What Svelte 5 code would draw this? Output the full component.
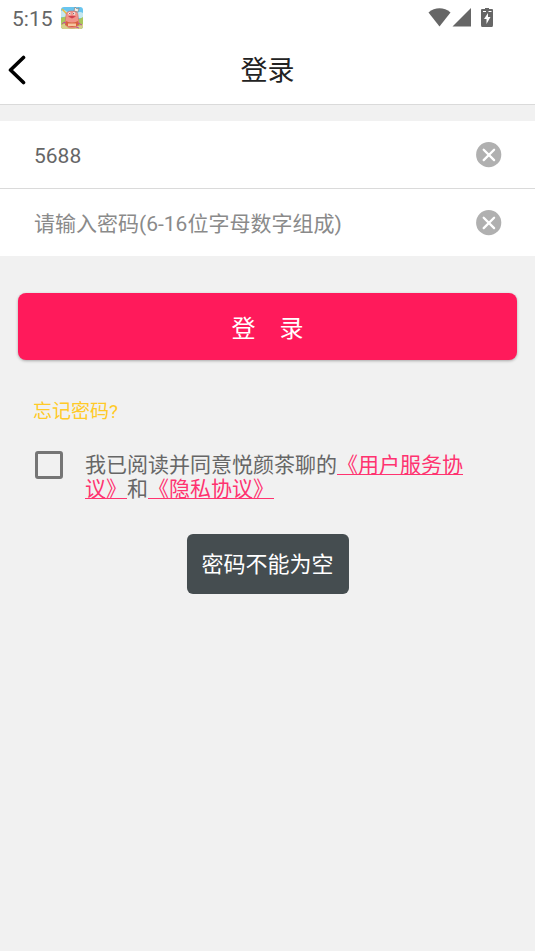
<script lang="ts">
    let account = $state('5688');
    let password = $state('');
    let agreed = $state(false);
    let toast = $state('密码不能为空');

    function submit(event: Event) {
        event.preventDefault();
        toast = password ? '' : '密码不能为空';
    }
</script>

{#snippet clearIcon()}
    <svg viewBox="0 0 26 26" width="26" height="26" aria-hidden="true">
        <circle cx="12.7" cy="12.7" r="12.6" fill="#b0b0b0" />
        <path d="M7.7 7.7l10.4 10.4M18.100 7.7L7.7 18.100" stroke="#fff" stroke-width="2.3" stroke-linecap="round" />
    </svg>
{/snippet}

<div class="screen">
    <div class="status-bar">
        <span class="time">5:15</span>
        <svg class="app-icon" viewBox="0 0 22 22" width="22" height="22" aria-hidden="true">
            <clipPath id="tile"><rect width="22" height="22" rx="3" /></clipPath>
            <g clip-path="url(#tile)">
                <rect width="22" height="22" fill="#69c5ef" />
                <path d="M0 4q3-2 5 0t4 0v6H0zM16 6q3-2 6 0v5h-6z" fill="#c5e8ef" />
                <path d="M0 11q5-3 11 0t11-1v12H0z" fill="#a9c75c" />
                <path d="M0 18q6-3 11 0t11-1v5H0z" fill="#d6cf8a" />
                <path d="M1 2l5 5" stroke="#e5bd3d" stroke-width="1.5" />
                <path d="M13 4l1-4 2 2 2-1-1 4z" fill="#f5f0e6" stroke="#77645f" stroke-width=".5" />
                <path d="M5 8q0-4 6-4t6 4l1 8q-1 5-7 5t-7-5z" fill="#f0948a" stroke="#c76861" stroke-width=".5" />
                <path d="M5 14q6 3 12 0l1 4q-7 4-14 0z" fill="#d8633f" />
                <path d="M7 16.500h8v2.500H7z" fill="#f5c7a0" />
                <circle cx="8.500" cy="6.500" r="1.200" fill="#fff" />
                <circle cx="13" cy="6.500" r="1.200" fill="#fff" />
                <circle cx="8.800" cy="6.600" r=".6" fill="#51353a" />
                <circle cx="12.700" cy="6.600" r=".6" fill="#51353a" />
                <path d="M7 9.500q4-1.500 8 0l-4 2z" fill="#cf3f4c" />
                <path d="M1 17q2-3 4-1M17 16l4 2M15 20l3 1" stroke="#bd4ba2" fill="none" />
            </g>
        </svg>
        <div class="indicators">
            <svg viewBox="0 0 66 20" width="66" height="20" aria-hidden="true" fill="#666">
                <path d="M0.500 4.400C7-1 16-1 22.500 4.400L11.500 18.500z" />
                <path d="M43 0v18.500H24.500z" />
                <path fill-rule="evenodd" d="M57 0h4v1h3q1 0 1 1v15q0 2-1 2H54q-1 0-1-2V2q0-1 1-1h3zM60 5l-4 6h2.500v5l4-7H60z" />
                <path d="M55 3.500h3M60.500 3.500h3" stroke="#fff" stroke-width="1" />
            </svg>
        </div>
    </div>

    <header>
        <button class="back" type="button" aria-label="返回">
            <svg viewBox="0 0 18 30" width="18" height="30" aria-hidden="true">
                <path d="M15.500 2.500L2.500 15l13 12.500" fill="none" stroke="#000" stroke-width="3.600" stroke-linecap="round" stroke-linejoin="round" />
            </svg>
        </button>
        <h1>登录</h1>
    </header>

    <form onsubmit={submit}>
        <div class="fields">
            <div class="field">
                <input type="text" aria-label="账号" bind:value={account} />
                <button class="clear" type="button" aria-label="清除账号" onclick={() => (account = '')}>
                    {@render clearIcon()}
                </button>
            </div>
            <div class="field">
                <input type="password" aria-label="密码" placeholder="请输入密码(6-16位字母数字组成)" bind:value={password} />
                <button class="clear" type="button" aria-label="清除密码" onclick={() => (password = '')}>
                    {@render clearIcon()}
                </button>
            </div>
        </div>

        <button class="login" type="submit"><span>登</span><span>录</span></button>

        <a class="forgot" href="#forgot">忘记密码?</a>

        <div class="agreement">
            <input type="checkbox" id="agree" bind:checked={agreed} />
            <label for="agree">我已阅读并同意悦颜茶聊的<a href="#service">《用户服务协议》</a>和<a href="#privacy">《隐私协议》</a></label>
        </div>
    </form>

    {#if toast}
        <div class="toast" role="status">{toast}</div>
    {/if}
</div>

<style>
    :global(body) {
        background: #f1f1f1;
    }

    .screen {
        position: relative;
        min-height: 100vh;
        font-family: Roboto, "Noto Sans CJK SC", sans-serif;
        color: #666;
        background: #f1f1f1;
    }

    button {
        padding: 0;
        border: none;
        background: none;
        font-family: inherit;
        cursor: pointer;
    }

    svg {
        display: block;
    }

    .status-bar {
        display: flex;
        align-items: center;
        height: 36px;
        padding: 0 41px 0 12px;
        background: #fff;
    }

    .time {
        padding-top: 2px;
        font-size: 21px;
        line-height: 32px;
    }

    .app-icon {
        margin-left: 8px;
    }

    .indicators {
        margin-left: auto;
    }

    header {
        display: grid;
        grid-template-columns: 48px 1fr 48px;
        align-items: center;
        height: 68px;
        background: #fff;
        border-bottom: 1px solid #dadada;
    }

    .back {
        padding-left: 8px;
        height: 48px;
    }

    h1 {
        margin: 0;
        padding-top: 2px;
        font-size: 27px;
        font-weight: 400;
        line-height: 40px;
        text-align: center;
        color: #222;
    }

    .fields {
        margin-top: 16px;
        background: #fff;
    }

    .field {
        display: flex;
        align-items: center;
        height: 67px;
        padding: 0 33px 0 34px;
    }

    .field + .field {
        border-top: 1px solid #dadada;
    }

    .field input {
        flex: 1;
        min-width: 0;
        height: 48px;
        padding: 2px 0 0;
        border: none;
        outline: none;
        background: none;
        font-family: inherit;
        font-size: 21px;
        color: #666;
    }

    .field input::placeholder {
        color: #8a8a8a;
        opacity: 1;
    }

    .login {
        display: flex;
        justify-content: center;
        align-items: center;
        gap: 24px;
        width: calc(100% - 36px);
        height: 67px;
        margin: 37px 18px 0;
        border-radius: 8px;
        background: #ff1a5b;
        box-shadow: 0 1px 3px rgba(0, 0, 0, 0.3);
        font-size: 24px;
        color: #fff;
    }

    .forgot {
        display: block;
        width: max-content;
        margin: 38px 0 0 33px;
        font-size: 19px;
        line-height: 28px;
        color: #ffca28;
        text-decoration: none;
    }

    .agreement {
        display: flex;
        align-items: flex-start;
        gap: 22px;
        margin: 25px 60px 0 35px;
    }

    .agreement input {
        appearance: none;
        flex: none;
        width: 28px;
        height: 28px;
        margin: 0;
        border: 3px solid #757575;
        border-radius: 3px;
    }

    .agreement input:checked {
        border-color: #ff1a5b;
        background: #ff1a5b;
    }

    .agreement label {
        padding-top: 2px;
        font-size: 21px;
        line-height: 24px;
        text-spacing-trim: space-all;
    }

    .agreement a {
        color: #ff3370;
        text-decoration: underline;
        text-decoration-thickness: 1px;
        text-underline-offset: 2px;
    }

    .toast {
        position: absolute;
        top: 534px;
        left: 50%;
        transform: translateX(-50%);
        padding: 15px 15px 13px;
        border-radius: 6px;
        background: #454d50;
        font-size: 22px;
        line-height: 32px;
        white-space: nowrap;
        color: #fff;
    }
</style>
